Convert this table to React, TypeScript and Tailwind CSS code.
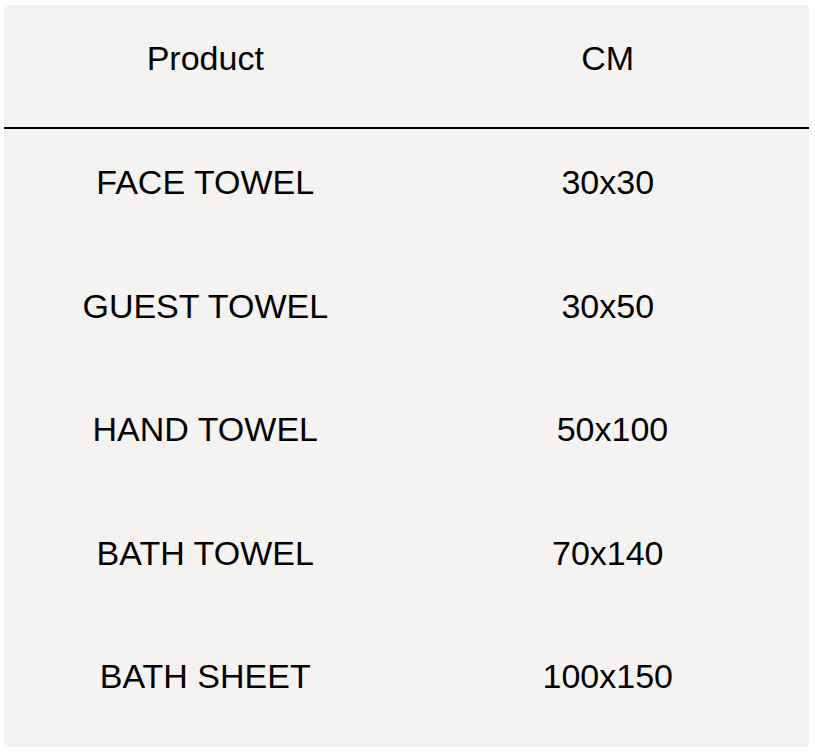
const rows: [string, string][] = [
  ['FACE TOWEL', '30x30'],
  ['GUEST TOWEL', '30x50'],
  ['HAND TOWEL', ' 50x100'],
  ['BATH TOWEL', '70x140'],
  ['BATH SHEET', '100x150'],
]

export default function App() {
  return (
    <div className="min-h-screen bg-white pt-[5px] pl-[4px] font-['Liberation_Sans',Arial,sans-serif] text-black">
      <div className="w-[805px] h-[742px] bg-[#f4f3f2] flex flex-col">
        <div className="grid grid-cols-2 shrink-0 h-[124px] pt-9 border-b-2 border-black text-[34px] leading-none">
          <div className="text-center">Product</div>
          <div className="text-center">CM</div>
        </div>
        {rows.map(([name, size]) => (
          <div key={name} className="grid grid-cols-2 shrink-0 h-[123.6px] pt-9 text-[34px] leading-none">
            <div className="text-center">{name}</div>
            <div className="text-center whitespace-pre">{size}</div>
          </div>
        ))}
      </div>
    </div>
  )
}
